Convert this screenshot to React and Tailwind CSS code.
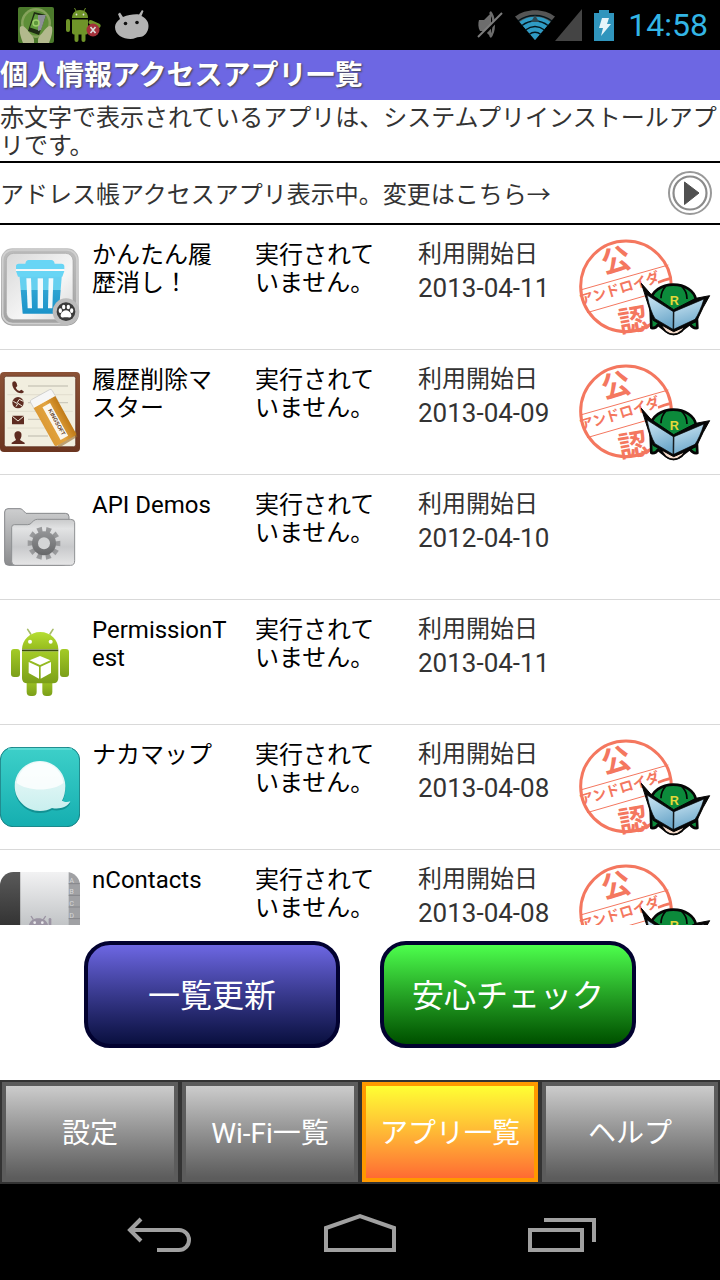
import React from "react";

const RED = "#f4775f";

function HandsIcon() {
  return (
    <svg viewBox="0 0 36 36" className="h-9 w-9" aria-hidden="true">
      <rect width="36" height="36" rx="2" fill="#4c7a2c" />
      <circle cx="18" cy="16" r="15" fill="#86a35c" />
      <circle cx="18" cy="16" r="12.500" fill="#5f8f38" />
      <path d="M2 20c3-3 6 1 9 5 2 3 5 5 5 8v3H5C3 31 1 25 2 20z" fill="#b3b98d" />
      <path d="M34 20c-3-3-6 1-9 5-2 3-5 5-5 8v3h11c2-5 4-11 3-16z" fill="#b3b98d" />
      <path d="M16 5l12 3-7 20-11-4z" fill="#1d2a12" />
      <path d="M17 7l9 2.500-5 14-9-3z" fill="#5f9a3c" />
      <path d="M20 8l8 0-5 15-3 1z" fill="#8d9096" />
      <circle cx="18" cy="16" r="3" fill="none" stroke="#9fd06c" strokeWidth="1.500" />
    </svg>
  );
}

function AndroidErrorIcon() {
  return (
    <svg viewBox="0 0 36 36" className="h-9 w-9" aria-hidden="true">
      <g fill="#6f9429">
        <path d="M6 11c0-5 3-8 8-8s8 3 8 8z" />
        <path d="M10 4L8.500 1M18 4l1.500-3" stroke="#6f9429" strokeWidth="1" />
        <path d="M6 12.500h16v13q0 2-2 2H8q-2 0-2-2z" />
        <rect x="0" y="12" width="4" height="13" rx="2" />
        <rect x="8.500" y="24" width="4" height="11" rx="2" />
        <rect x="15.500" y="24" width="4" height="11" rx="2" />
        <rect x="23" y="13" width="13" height="4.500" rx="2.200" transform="rotate(25 25 14)" />
      </g>
      <circle cx="10.500" cy="7.500" r="0.900" fill="#ddd" />
      <circle cx="17.500" cy="7.500" r="0.900" fill="#ddd" />
      <circle cx="27" cy="23" r="6.500" fill="#a3303a" />
      <path d="M24.500 20l5 6M29.500 20l-5 6" stroke="#ddd" strokeWidth="1.600" />
    </svg>
  );
}

function BeanIcon() {
  return (
    <svg viewBox="0 0 36 36" className="h-9 w-9" aria-hidden="true">
      <path
        d="M4 7l2-1.500 3 4.500c5-2 11-3 16-2.500l3-4.500 1.500 1-2 5c4 2 7 5 7 10 0 6-4 11-9 11-3 0-5 2-9 2C9 32 1 28 1 20c0-3 2-6 5-8z"
        fill="#b3b3b3"
      />
      <circle cx="11.500" cy="16.500" r="1.800" fill="#111" />
      <circle cx="23" cy="15.500" r="1.800" fill="#111" />
    </svg>
  );
}

function MuteIcon() {
  return (
    <svg viewBox="0 0 26 30" className="h-[30px] w-[26px]" aria-hidden="true">
      <path d="M2 10h5l7-7v24l-6-6H3c-2-3-2-8-1-11z" fill="#6d6d6d" />
      <path d="M13 2c5 5 5 20 0 25" fill="none" stroke="#6d6d6d" strokeWidth="2.500" />
      <path d="M2 29L26 4" stroke="#000" strokeWidth="3" />
      <path d="M1 27L25 3" stroke="#7d7d7d" strokeWidth="2" />
    </svg>
  );
}

function WifiIcon() {
  return (
    <svg viewBox="0 0 40 30" className="h-[30px] w-10" aria-hidden="true">
      <path d="M20 30L0 6.500C11-2 29-2 40 6.500z" fill="#555" />
      <path d="M20 30L4.500 12C13 5 27 5 35.500 12z" fill="#2f9bc4" />
      <g fill="none" stroke="#03151c" strokeWidth="1.500">
        <path d="M3 11c10-7.500 24-7.500 34 0M7 15.500c8-6 18-6 26 0M10.500 20c6-4.500 13-4.500 19 0M14 24.500c4-3 8-3 12 0" />
      </g>
      <path d="M20 5l4 7h-8z" fill="#2d4853" />
    </svg>
  );
}

function SignalIcon() {
  return (
    <svg viewBox="0 0 27 32" className="h-8 w-[27px]" aria-hidden="true">
      <path d="M27 0v32H0z" fill="#444" />
    </svg>
  );
}

function BatteryIcon() {
  return (
    <svg viewBox="0 0 20 31" className="h-[31px] w-5" aria-hidden="true">
      <path d="M5 0h10v3h5v28H0V3h5z" fill="#3095bd" />
      <path d="M8 8h7l-2 6h4L7 26l2-8H5z" fill="#e6f4fa" />
    </svg>
  );
}

function PlayIcon() {
  return (
    <svg viewBox="0 0 46 46" className="h-[46px] w-[46px]" aria-hidden="true">
      <circle cx="23" cy="23" r="21" fill="#fff" stroke="#999" strokeWidth="2" />
      <circle cx="23" cy="23" r="16.500" fill="#fff" stroke="#8b8b8b" strokeWidth="2.200" />
      <path d="M17.500 12L32 23 17.500 34.500z" fill="#505050" stroke="#505050" strokeLinejoin="round" />
    </svg>
  );
}

function TrashIcon() {
  return (
    <svg viewBox="0 0 240 240" className="h-20 w-20" aria-hidden="true">
      <defs>
        <linearGradient id="tr-f" x2="0" y2="1">
          <stop offset="0" stopColor="#bdbdbd" />
          <stop offset="1" stopColor="#a2a2a2" />
        </linearGradient>
        <linearGradient id="tr-b" x2="1" y2="1">
          <stop offset="0" stopColor="#d8d8d8" />
          <stop offset=".6" stopColor="#f6f6f6" />
          <stop offset="1" stopColor="#d9d9d9" />
        </linearGradient>
        <linearGradient id="tr-c" x2="0" y2="1">
          <stop offset="0" stopColor="#66d0f2" />
          <stop offset=".4" stopColor="#66d0ee" />
          <stop offset=".42" stopColor="#2da3d2" />
          <stop offset="1" stopColor="#1b93c9" />
        </linearGradient>
      </defs>
      <rect x="3" y="4" width="233" height="232" rx="34" fill="url(#tr-f)" />
      <rect x="8" y="9" width="223" height="221" rx="30" fill="none" stroke="#d0d0d0" strokeWidth="5" />
      <rect x="19" y="19" width="200" height="199" rx="22" fill="url(#tr-b)" stroke="#a5a5a5" strokeWidth="2" />
      <path d="M58 80h128l-10 120H68z" fill="url(#tr-c)" />
      <path d="M48 58q0-8 8-8h20q2-11 10-11h68q8 0 10 11h20q9 0 9 8v9H48zM48 72h145l-6 17H54z" fill="#68d5f5" />
      <path d="M48 69h145" stroke="#fff" strokeWidth="4" />
      <g fill="#f1fafd">
        <path d="M79 94h14l3 90H83z" />
        <rect x="113" y="94" width="16" height="90" />
        <path d="M146 94h14l-3 90h-13z" />
      </g>
      <circle cx="198" cy="194" r="40" fill="#bcbcbc" />
      <circle cx="198" cy="194" r="28" fill="#3b3b3b" />
      <g fill="#fff">
        <path d="M198 190c9 0 17 10 16 17-2 7-9 4-16 4s-14 3-16-4c-1-7 7-17 16-17z" />
        <ellipse cx="181" cy="191" rx="5" ry="7" />
        <ellipse cx="191" cy="180" rx="5" ry="7" />
        <ellipse cx="205" cy="180" rx="5" ry="7" />
        <ellipse cx="215" cy="191" rx="5" ry="7" />
      </g>
    </svg>
  );
}

function EraserIcon() {
  return (
    <svg viewBox="0 0 240 240" className="h-20 w-20" aria-hidden="true">
      <defs>
        <linearGradient id="er-f" x2="0" y2="1">
          <stop offset="0" stopColor="#8a5135" />
          <stop offset="1" stopColor="#6b3520" />
        </linearGradient>
        <linearGradient id="er-o" x2="1" y2="0">
          <stop offset="0" stopColor="#dc9a35" />
          <stop offset=".5" stopColor="#e2a440" />
          <stop offset="1" stopColor="#c07a17" />
        </linearGradient>
      </defs>
      <rect width="240" height="240" rx="12" fill="url(#er-f)" />
      <rect x="13" y="13" width="214" height="211" rx="6" fill="#f1eedf" stroke="#56291a" strokeWidth="2" />
      <path d="M22 68h196M22 118h196M22 168h196" stroke="#dad6c5" strokeWidth="2" />
      <path d="M84 42h120M84 92h120M84 142h60M84 192h60" stroke="#cdcabd" strokeWidth="4" />
      <g fill="#5d2b20">
        <path d="M38 30q8-6 12 4l2 8-5 5q4 8 11 10l6-4 7 5q2 4-5 6c-18 2-34-22-28-34z" />
        <circle cx="54" cy="92" r="17" />
        <rect x="36" y="131" width="36" height="26" rx="2" />
        <path d="M54 178c9 0 12 7 10 16-1 5-4 7-4 10l14 8q2 4-2 4H37q-4 0-2-4l13-8c0-3-3-5-4-10-2-9 1-16 10-16z" />
      </g>
      <path d="M40 88l10 6 8-12 12 6M48 104l6-10 12 8" fill="none" stroke="#f1eedf" strokeWidth="3" />
      <path d="M37 133l17 14 17-14" fill="none" stroke="#f1eedf" strokeWidth="3" />
      <path d="M176 228l56-34-4-16-55 42z" fill="#9a6a2a" opacity=".6" />
      <g transform="translate(89 86) rotate(-29)">
        <rect width="74" height="46" rx="6" fill="#f6f6f6" stroke="#c5c5c5" strokeWidth="2" />
        <path d="M0 24h74v128q0 6-6 6H6q-6 0-6-6z" fill="url(#er-o)" />
        <path d="M0 24h74" stroke="#fff" strokeWidth="2" />
        <rect x="24" y="36" width="26" height="112" fill="#fbf7ee" />
        <text
          x="36"
          y="46"
          transform="rotate(90 32 48)"
          fontSize="17"
          fontWeight="700"
          fontFamily="Liberation Sans, sans-serif"
          fill="#5a3a28"
        >
          KINGSOFT
        </text>
      </g>
    </svg>
  );
}

function FolderIcon() {
  const teeth = [0, 36, 72, 108, 144, 180, 216, 252, 288, 324];
  return (
    <svg viewBox="0 15 240 240" className="h-20 w-20" aria-hidden="true">
      <defs>
        <linearGradient id="fo-b" x2="0" y2="1">
          <stop offset="0" stopColor="#cdcecf" />
          <stop offset="1" stopColor="#8b8c8e" />
        </linearGradient>
        <linearGradient id="fo-f" x2="0" y2="1">
          <stop offset="0" stopColor="#c9cacb" />
          <stop offset=".2" stopColor="#e2e3e4" />
          <stop offset=".6" stopColor="#c8c9cb" />
          <stop offset="1" stopColor="#e6e6e7" />
        </linearGradient>
        <linearGradient id="fo-g" gradientUnits="userSpaceOnUse" x1="0" y1="105" x2="0" y2="205">
          <stop offset="0" stopColor="#9b9c9e" />
          <stop offset="1" stopColor="#5d5e60" />
        </linearGradient>
      </defs>
      <path
        d="M14 60q0-10 10-10h36q6 0 10 6l8 8h118q11 0 11 10v120q0 26-20 26H26q-12 0-12-12z"
        fill="url(#fo-b)"
        stroke="#85878a"
        strokeWidth="3"
      />
      <path
        d="M35 106q0-8 8-8h40q8 0 12-6l5-5q5-5 12-5h100q12 0 12 10v114q0 14-12 14H45q-10 0-10-12z"
        fill="url(#fo-f)"
        stroke="#8e9092"
        strokeWidth="3"
      />
      <g fill="url(#fo-g)">
        {teeth.map((a) => (
          <path key={a} d="M124 105h17l-3 20h-11z" transform={`rotate(${a + 18} 132 154)`} />
        ))}
        <circle cx="132" cy="154" r="36" />
      </g>
      <circle cx="132" cy="154" r="18" fill="#d4d5d6" />
    </svg>
  );
}

function AndroidIcon() {
  return (
    <svg viewBox="0 16 240 240" className="h-20 w-20" aria-hidden="true">
      <defs>
        <linearGradient id="an-g" x2="0" y2="1">
          <stop offset="0" stopColor="#a4cb26" />
          <stop offset="1" stopColor="#7b9f19" />
        </linearGradient>
        <linearGradient id="an-h" x2="0" y2="1">
          <stop offset="0" stopColor="#b6de34" />
          <stop offset="1" stopColor="#96bc1d" />
        </linearGradient>
      </defs>
      <path d="M92 52L83 38M150 52l9-14" stroke="#a7bd68" strokeWidth="5" strokeLinecap="round" />
      <g fill="url(#an-g)">
        <rect x="33" y="97" width="27" height="84" rx="9" />
        <rect x="180" y="97" width="27" height="84" rx="9" />
        <rect x="80" y="185" width="30" height="53" rx="12" />
        <rect x="127" y="185" width="30" height="53" rx="12" />
        <path d="M66 104h109v80q0 16-16 16H82q-16 0-16-16z" />
      </g>
      <path d="M66 98c0-28 24-52 55-52s54 24 54 52z" fill="url(#an-h)" />
      <path d="M66 101h109" stroke="#3d4d10" strokeWidth="5" />
      <circle cx="90" cy="75" r="6" fill="#fff" />
      <circle cx="152" cy="75" r="6" fill="#fff" />
      <g fill="#fff">
        <path d="M120 118l31 13-31 14-31-14z" />
        <path d="M86 136l31 14v36l-31-17z" />
        <path d="M153 136l-31 14v36l31-17z" />
      </g>
    </svg>
  );
}

function BubbleIcon() {
  return (
    <svg viewBox="0 0 240 240" className="h-20 w-20" aria-hidden="true">
      <defs>
        <linearGradient id="bu-b" x2="0" y2="1">
          <stop offset="0" stopColor="#3dd0c9" />
          <stop offset="1" stopColor="#15aeb0" />
        </linearGradient>
        <linearGradient id="bu-w" x2="0" y2="1">
          <stop offset="0" stopColor="#eefafa" />
          <stop offset="1" stopColor="#c9efee" />
        </linearGradient>
      </defs>
      <rect x="1" y="1" width="238" height="238" rx="38" fill="url(#bu-b)" stroke="#147f82" strokeWidth="3" />
      <path d="M24 6h192" stroke="#7ce8e2" strokeWidth="3" />
      <path
        d="M120 47c-42 0-76 34-76 75s34 76 76 76c14 0 26-3 36-9 22 4 48-2 55-22-8 2-17 3-25-2 7-12 10-27 10-43 0-41-34-75-76-75z"
        fill="#0d8285"
        opacity=".7"
      />
      <path
        d="M120 42c-42 0-76 34-76 75s34 75 76 75c14 0 26-3 36-9 20 5 46-1 55-20-8 3-17 3-25-2 7-12 10-27 10-44 0-41-34-75-76-75z"
        fill="url(#bu-w)"
      />
      <path d="M50 108c4-34 34-62 70-62s66 28 70 62c-30 26-108 26-140 0z" fill="#fff" opacity=".8" />
    </svg>
  );
}

function ContactsIcon() {
  return (
    <svg viewBox="0 0 240 240" className="h-20 w-20" aria-hidden="true">
      <defs>
        <linearGradient id="co-d" x2="0" y2="1">
          <stop offset="0" stopColor="#5a5a5a" />
          <stop offset="1" stopColor="#202020" />
        </linearGradient>
        <linearGradient id="co-w" x2="0" y2="1">
          <stop offset="0" stopColor="#f2f2f3" />
          <stop offset="1" stopColor="#a9adb0" />
        </linearGradient>
        <clipPath id="co-c">
          <rect width="240" height="240" rx="40" />
        </clipPath>
      </defs>
      <g clipPath="url(#co-c)">
        <rect width="62" height="240" fill="url(#co-d)" />
        <rect x="61" width="146" height="240" fill="url(#co-w)" />
        <rect x="206" width="34" height="240" fill="#a0a1a4" />
        <path d="M206 35h34M206 70h34M206 105h34M206 140h34M206 175h34" stroke="#85868a" strokeWidth="3" />
        <g fontFamily="Roboto, sans-serif" fontSize="22" fill="#d5d6d8">
          <text x="208" y="32">A</text>
          <text x="208" y="67">B</text>
          <text x="208" y="101">C</text>
          <text x="208" y="137">D</text>
        </g>
        <path d="M100 143l-7-11M130 143l7-11" stroke="#9b94a3" strokeWidth="4" />
        <path d="M86 166c0-16 12-27 29-27s30 11 30 27v50H86z" fill="#9b94a3" />
        <circle cx="104" cy="152" r="4" fill="#e8e8ea" />
        <circle cx="127" cy="152" r="4" fill="#e8e8ea" />
        <rect x="146" y="138" width="8" height="60" rx="4" fill="#9b94a3" />
      </g>
    </svg>
  );
}

function CertifiedStamp() {
  return (
    <svg viewBox="0 0 420 315" className="w-full" role="img" aria-label="公認アンドロイダー">
      <defs>
        <linearGradient id="st-w" x2="0.300" y2="1">
          <stop offset="0" stopColor="#cfe8f5" />
          <stop offset="1" stopColor="#6fa9cb" />
        </linearGradient>
      </defs>
      <g fill="none" stroke={RED}>
        <circle cx="153" cy="154" r="136" strokeWidth="9" />
        <path d="M20 164L280 90M36 233L240 174" strokeWidth="3" />
      </g>
      <g fill={RED} fontFamily="'Noto Sans CJK JP', sans-serif" textAnchor="middle">
        <text fontSize="88" fontWeight="700" transform="translate(130 106) rotate(-14)">
          公
        </text>
        <text fontSize="42" fontWeight="700" transform="translate(138 175) rotate(-17)">
          アンドロイダ
        </text>
        <path d="M248 139q20-9 40-14l2 9q-18 3-40 12z" />
        <text fontSize="88" fontWeight="700" transform="translate(180 286) rotate(-10)">
          認
        </text>
      </g>
      <g stroke="#050505" strokeLinejoin="round">
        <path
          d="M226 200c4-32 34-51 69-51 34 0 64 18 68 46l4 84q-14 2-22-12l-22 16q-26 26-54 2l-20-16q-6 12-20 10z"
          fill="#0c8a3b"
          strokeWidth="8"
        />
        <path d="M258 190q0-22 14-36M320 154q16 14 16 38" fill="none" strokeWidth="5" />
        <path d="M256 264l38-4 40 4q-8 32-38 34-28 0-40-34z" fill="#f7dccb" strokeWidth="5" />
        <path
          d="M199 145l29 33 68 46 66-34 42-8-20 36-20 42-68 30-62-34-18-58z"
          fill="#070707"
          strokeWidth="3"
        />
        <path d="M216 180l79 50-1 53-54-32q-14-22-24-71z" fill="url(#st-w)" strokeWidth="2" />
        <path d="M387 192l-90 38-1 53 64-30q14-20 27-61z" fill="url(#st-w)" strokeWidth="2" />
      </g>
      <text x="284" y="209" fontSize="38" fontWeight="700" fontFamily="Liberation Sans, sans-serif" fill="#e6d83a">
        R
      </text>
    </svg>
  );
}

const apps = [
  { name: "かんたん履歴消し！", date: "2013-04-11", Icon: TrashIcon, certified: true },
  { name: "履歴削除マスター", date: "2013-04-09", Icon: EraserIcon, certified: true },
  { name: "API Demos", date: "2012-04-10", Icon: FolderIcon },
  { name: "PermissionTest", date: "2013-04-11", Icon: AndroidIcon },
  { name: "ナカマップ", date: "2013-04-08", Icon: BubbleIcon, certified: true },
  { name: "nContacts", date: "2013-04-08", Icon: ContactsIcon, certified: true },
];

function AppRow({ app }) {
  const { Icon } = app;
  return (
    <li className="grid h-[125px] shrink-0 grid-cols-[80px_163fr_163fr_169fr_145px] border-b border-[#d9d9d9] text-2xl leading-7 text-black">
      <div className="flex items-center">
        <Icon />
      </div>
      <div className="pt-4 pr-3 pl-3 break-all">{app.name}</div>
      <div className="pt-4 pr-3 pl-3">実行されていません。</div>
      <div className="pt-3 pl-3 leading-[34px] text-[#333]">
        <div>利用開始日</div>
        <div className="text-[26px] leading-[34px] whitespace-nowrap">{app.date}</div>
      </div>
      <div className="flex items-center pr-[5px]">{app.certified && <CertifiedStamp />}</div>
    </li>
  );
}

const tabs = [
  { label: "設定" },
  { label: "Wi-Fi一覧" },
  { label: "アプリ一覧", active: true },
  { label: "ヘルプ" },
];

const tabBase = "flex-1 border-4 pt-1 text-[28px] text-white";

export default function App() {
  return (
    <div className="flex h-screen flex-col overflow-hidden bg-white font-['Roboto','Noto_Sans_CJK_JP',sans-serif]">
      <div className="flex h-[50px] shrink-0 items-center justify-between bg-black pr-3 pl-[18px]">
        <div className="flex items-center gap-3">
          <HandsIcon />
          <AndroidErrorIcon />
          <BeanIcon />
        </div>
        <div className="flex items-center">
          <MuteIcon />
          <div className="flex items-center pl-3">
            <WifiIcon />
            <SignalIcon />
          </div>
          <div className="pr-3.5 pl-3">
            <BatteryIcon />
          </div>
          <time className="text-[32px] leading-10 text-[#33b5e5]">14:58</time>
        </div>
      </div>

      <h1 className="h-[50px] shrink-0 bg-[#6d67e3] pt-0.5 text-[28px] leading-[48px] font-bold whitespace-nowrap text-white [text-shadow:1px_1px_2px_#444]">
        個人情報アクセスアプリ一覧
      </h1>

      <p className="shrink-0 border-b-2 border-black pt-1 pb-px text-2xl leading-7 text-[#333]">
        赤文字で表示されているアプリは、システムプリインストールアプリです。
      </p>

      <div className="flex h-[62px] shrink-0 items-center justify-between border-b-2 border-black pr-[7px] text-2xl text-[#333]">
        <span className="pt-1">アドレス帳アクセスアプリ表示中。変更はこちら→</span>
        <button type="button" aria-label="表示を変更">
          <PlayIcon />
        </button>
      </div>

      <ul className="flex min-h-0 flex-1 flex-col overflow-y-auto [scrollbar-width:none]">
        {apps.map((app) => (
          <AppRow key={app.name} app={app} />
        ))}
      </ul>

      <div className="flex shrink-0 justify-center gap-10 px-6 pt-4 pb-8 text-[32px] text-white">
        <button
          type="button"
          className="h-[107px] w-64 rounded-[26px] border-4 border-[#020230] bg-linear-to-b from-[#6d67e3] to-[#0a1040] pt-0.5"
        >
          一覧更新
        </button>
        <button
          type="button"
          className="h-[107px] w-64 rounded-[26px] border-4 border-[#020230] bg-linear-to-b from-[#4dff4d] to-[#005000] pt-0.5"
        >
          安心チェック
        </button>
      </div>

      <nav className="flex h-[104px] shrink-0 gap-1 bg-[#333] p-0.5">
        {tabs.map((tab) => (
          <button
            key={tab.label}
            type="button"
            aria-current={tab.active ? "page" : undefined}
            className={
              tab.active
                ? `${tabBase} border-[#ff9900] bg-linear-to-b from-[#ffff33] to-[#ff6a33]`
                : `${tabBase} border-[#5c5c5c] bg-linear-to-b from-[#cccccc] to-[#5c5c5c]`
            }
          >
            {tab.label}
          </button>
        ))}
      </nav>

      <div className="flex h-24 shrink-0 items-center justify-center gap-[132px] bg-black">
        <button type="button" aria-label="戻る">
          <svg viewBox="0 0 72 40" className="h-10 w-[72px]" fill="none" stroke="#a0a0a0" strokeWidth="4">
            <path d="M21 7L10 18l11 11" />
            <path d="M10 18h49a10 10 0 0 1 10 10a10 10 0 0 1-10 10H37" />
          </svg>
        </button>
        <button type="button" aria-label="ホーム">
          <svg viewBox="0 0 72 40" className="h-10 w-[72px]" fill="none" stroke="#a0a0a0" strokeWidth="4">
            <path d="M2 38V16L36 4l34 12v22z" />
          </svg>
        </button>
        <button type="button" aria-label="最近使ったアプリ">
          <svg viewBox="0 0 72 40" className="h-10 w-[72px]" fill="none" stroke="#a0a0a0" strokeWidth="4">
            <path d="M2 18h52v20H2z" />
            <path d="M16 8h50v22" />
          </svg>
        </button>
      </div>
    </div>
  );
}
